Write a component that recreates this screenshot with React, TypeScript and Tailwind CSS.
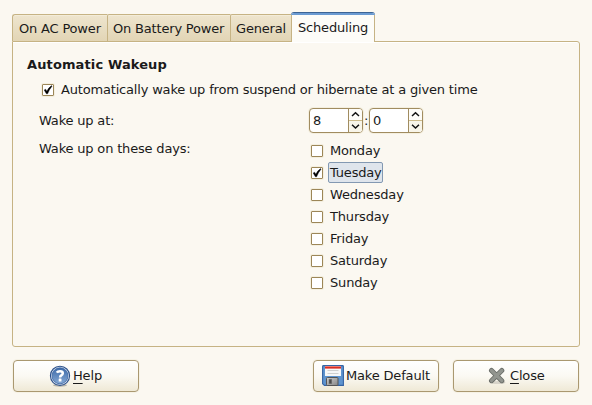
import type { ReactNode } from "react";

function Check({ checked = false }: { checked?: boolean }) {
  return (
    <span className="relative block h-3 w-3 shrink-0 rounded-[1px] border border-[#9c8657] bg-white shadow-[0_0_0_1px_#f4efdf]">
      {checked && (
        <svg className="absolute -top-px -left-px" width="12" height="12" viewBox="0 0 12 12">
          <path d="M2.2 6 L3.6 5.2 L4.8 7.2 Q6.6 3.6 9.6 1.6 L10 2.2 Q7.3 5.4 5.6 9.8 L4.4 9.8 Z" fill="#000" stroke="#000" strokeWidth=".4" />
        </svg>
      )}
    </span>
  );
}

function Spin({ value }: { value: string }) {
  return (
    <div className="flex h-[25px] w-[54px] overflow-hidden rounded-[4px] border border-[#a18c60] bg-white shadow-[0_0_0_1px_#f4efdf]">
      <div className="w-[38px] pl-[3px] leading-[24px]">{value}</div>
      <div className="flex w-[14px] flex-col border-l border-[#a18c60] bg-[#fdfcf8]">
        <div className="flex h-3 items-center justify-center border-b border-[#cdbb8a]">
          <svg width="9" height="7" viewBox="0 0 9 7"><path d="M1 5 L4.5 1.8 L8 5" fill="none" stroke="#111" strokeWidth="1.5" /></svg>
        </div>
        <div className="flex h-[11px] items-center justify-center bg-[#f8f5e9]">
          <svg width="9" height="7" viewBox="0 0 9 7"><path d="M1 1.8 L4.5 5 L8 1.8" fill="none" stroke="#111" strokeWidth="1.5" /></svg>
        </div>
      </div>
    </div>
  );
}

function Tab({ className, children }: { className: string; children: ReactNode }) {
  return (
    <div className={`h-[27px] border-t border-l border-[#c6b384] bg-linear-to-b from-[#eee5ce] to-[#e2d5b5] leading-[28px] shadow-[inset_0_1px_0_#f3ecd9] ${className}`}>
      {children}
    </div>
  );
}

function Button({ className, children }: { className: string; children: ReactNode }) {
  return (
    <button className={`flex h-8 w-[126px] items-center rounded-[4px] border border-[#aa9870] bg-linear-to-b from-white from-0% via-[#fbf9f3] via-50% to-[#efe9d6] to-100% tracking-[-0.17px] shadow-[0_0_0_1px_#f6f2e5] ${className}`}>
      {children}
    </button>
  );
}

function HelpIcon() {
  return (
    <svg width="22" height="22" viewBox="0 0 22 22">
      <defs>
        <linearGradient id="help" x1="0" y1="0" x2="0" y2="1">
          <stop offset="0" stopColor="#3d6aa8" />
          <stop offset="1" stopColor="#86a9d5" />
        </linearGradient>
      </defs>
      <ellipse cx="11" cy="20.3" rx="7" ry="1.4" fill="#000" opacity=".25" />
      <circle cx="11" cy="10.8" r="9.6" fill="#e8eef6" stroke="#2d528c" strokeWidth="1.1" />
      <circle cx="11" cy="10.8" r="8" fill="url(#help)" stroke="#3a66a5" strokeWidth=".8" />
      <path d="M7.8 7.6 Q8.6 6.2 11 6.2 Q13.8 6.2 13.8 8.2 Q13.8 9.4 12.3 10.4 Q11.1 11.1 11.1 12.4" fill="none" stroke="#fff" strokeWidth="2.5" />
      <rect x="9.7" y="13.6" width="2.8" height="2.8" rx=".5" fill="#fff" />
    </svg>
  );
}

function SaveIcon() {
  return (
    <svg width="22" height="22" viewBox="0 0 22 22">
      <defs>
        <linearGradient id="metal" x1="0" y1="0" x2="1" y2="1">
          <stop offset="0" stopColor="#cfcfcf" />
          <stop offset="1" stopColor="#858585" />
        </linearGradient>
      </defs>
      <path d="M.6 1.5 Q.6.6 1.5.6 H20.5 Q21.4.6 21.4 1.5 V20.4 H2.4 L.6 18.8 Z" fill="#5f94cf" stroke="#3563a3" strokeWidth="1.1" />
      <rect x="3" y="1" width="16" height="10" fill="#f7f7f7" />
      <rect x="3" y="1.4" width="16" height="2.2" fill="#dc2c20" />
      <path d="M5.5 5.5 H16.5 M5.5 8.5 H16.5" stroke="#d0d0d0" />
      <rect x="4.5" y="12.5" width="11.5" height="8" rx="1" fill="url(#metal)" stroke="#555" />
      <rect x="7" y="14.2" width="2.8" height="4.6" fill="#4c4c4c" stroke="#777" strokeWidth=".5" />
    </svg>
  );
}

function CloseIcon() {
  return (
    <svg width="18" height="18" viewBox="0 0 18 18">
      <ellipse cx="10" cy="15.5" rx="7.5" ry="1.6" fill="#000" opacity=".12" />
      <path d="M3.5 3.5 L13.8 13.7 M13.8 3.5 L3.5 13.7" stroke="#6b6e69" strokeWidth="5" strokeLinecap="round" />
      <path d="M3.5 3.5 L13.8 13.7 M13.8 3.5 L3.5 13.7" stroke="#92958f" strokeWidth="3.2" strokeLinecap="round" />
    </svg>
  );
}

const days = ["Monday", "Tuesday", "Wednesday", "Thursday", "Friday", "Saturday", "Sunday"];

export default function App() {
  return (
    <div className="h-[405px] w-[592px] overflow-hidden bg-[#fbf8f1] px-3 pt-3 font-['DejaVu_Sans','Liberation_Sans',sans-serif] text-[13px] leading-4 tracking-[-0.18px] whitespace-nowrap text-[#1a1a1a]">
      <div className="relative z-10 flex h-[30px] items-end">
        <Tab className="mb-px w-[95px] rounded-tl-[3px] pl-[6px]"><span>On AC Power</span></Tab>
        <Tab className="mb-px w-[123px] rounded-tl-[2px] pl-[5px]"><span>On Battery Power</span></Tab>
        <Tab className="mb-px w-[61px] rounded-tl-[2px] pl-[5px]"><span>General</span></Tab>
        <div className="flex h-[30px] w-[84px] flex-col overflow-hidden rounded-t-[3px] border-t border-[#3c6495] bg-[#fdfcf8]">
          <div className="h-[2px] bg-[#6b9bd2]" />
          <div className="flex-1 border-x border-[#c6b384] pl-[6px] leading-[25px]">Scheduling</div>
        </div>
      </div>
      <div className="-mt-px h-[306px] w-[568px] rounded-b-[3px] rounded-tr-[3px] border border-[#c6b384] pt-[15px] pl-[14px] shadow-[inset_0_1px_0_#fff]">
        <h1 className="font-bold tracking-[0.12px]">Automatic Wakeup</h1>
        <div className="mt-[9px] ml-[15px] flex h-4 items-center gap-[7px]">
          <Check checked />
          <span>Automatically wake up from suspend or hibernate at a given time</span>
        </div>
        <div className="mt-[10px] ml-3 flex h-[25px] items-center">
          <span className="w-[270px]">Wake up at:</span>
          <Spin value="8" />
          <span className="w-[6px] text-center">:</span>
          <Spin value="0" />
        </div>
        <div className="mt-[7px] ml-3 flex">
          <span className="w-[272px] pt-px">Wake up on these days:</span>
          <div>
            {days.map((d) => (
              <div key={d} className="flex h-[22px] items-center">
                <Check checked={d === "Tuesday"} />
                <span className={d === "Tuesday" ? "mb-px ml-[5px] h-[21px] w-[55px] rounded-[2px] border border-[#8399b2] bg-[#dfe5ec] px-px leading-[20px]" : "ml-[7px]"}>{d}</span>
              </div>
            ))}
          </div>
        </div>
      </div>
      <div className="mt-[13px] ml-px flex">
        <Button className="gap-[2px] pl-[35px]"><HelpIcon /><span><u className="underline-offset-[3px]">H</u>elp</span></Button>
        <Button className="ml-[174px] pl-2"><SaveIcon /><span className="ml-[2px]">Make Default</span></Button>
        <Button className="ml-[14px] pl-[34px]"><CloseIcon /><span className="ml-[4px]"><u className="underline-offset-[3px]">C</u>lose</span></Button>
      </div>
    </div>
  );
}
